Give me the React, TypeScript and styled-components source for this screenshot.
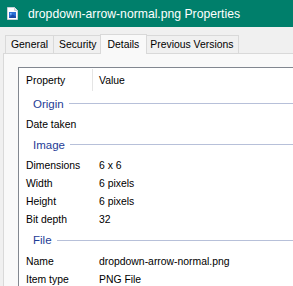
import { FC } from 'react';
import styled, { createGlobalStyle } from 'styled-components';

const Global = createGlobalStyle`
    html, body {
        margin: 0;
        padding: 0;
        background: #f0f0f0;
        overflow: hidden;
    }
    body {
        font-family: 'Liberation Sans', Arial, sans-serif;
        font-size: 10.4px;
        color: #000;
    }
`;

const Window = styled.div`
    width: 293px;
    height: 286px;
    display: flex;
    flex-direction: column;
    background: #f0f0f0;
    overflow: hidden;
`;

const TitleBar = styled.div`
    height: 27px;
    flex: none;
    display: flex;
    align-items: center;
    gap: 10px;
    padding-left: 7px;
    background: #007f6b;
    color: #fff;
    font-size: 12.2px;
    white-space: nowrap;
`;

const TabStrip = styled.div`
    display: flex;
    align-items: flex-end;
    height: 26px;
    padding-left: 5px;
    flex: none;
    position: relative;
    z-index: 1;
`;

const Tab = styled.div<{ $active?: boolean }>`
    height: ${(p) => (p.$active ? '19px' : '17px')};
    padding: 0 ${(p) => (p.$active ? '7px' : '5px')};
    margin-left: ${(p) => (p.$active ? '-3px' : '-1px')};
    margin-right: ${(p) => (p.$active ? '-2px' : '0')};
    margin-bottom: ${(p) => (p.$active ? '-1px' : '0')};
    border: 1px solid #d9d9d9;
    border-bottom: none;
    background: ${(p) => (p.$active ? '#f9f9f9' : '#f0f0f0')};
    display: flex;
    align-items: center;
    white-space: nowrap;
    position: relative;
    z-index: ${(p) => (p.$active ? 1 : 0)};
    &:first-child {
        margin-left: 0;
    }
`;

const Panel = styled.div`
    flex: 1;
    margin-left: 3px;
    border-top: 1px solid #d9d9d9;
    border-left: 1px solid #d9d9d9;
    background: #f9f9f9;
    padding: 13px 0 0 14px;
    display: flex;
`;

const ListView = styled.div`
    flex: 1;
    border-top: 1px solid #828790;
    border-left: 1px solid #828790;
    background: #fff;
    padding-left: 7px;
`;

const Header = styled.div`
    display: flex;
    height: 24px;
    align-items: center;
`;

const HeaderCell = styled.div<{ $w?: number; $pad?: number }>`
    width: ${(p) => (p.$w ? `${p.$w}px` : 'auto')};
    padding-left: ${(p) => p.$pad ?? 0}px;
    height: 100%;
    display: flex;
    align-items: center;
`;

const HeaderDivider = styled.div`
    width: 1px;
    height: 22px;
    background: #e5e5e5;
`;

const Row = styled.div`
    display: flex;
    height: 18.2px;
    align-items: center;
    white-space: nowrap;
`;

const Key = styled.div`
    width: 73px;
    flex: none;
`;

const Group = styled.div`
    display: flex;
    align-items: center;
    height: 23px;
    padding-left: 7px;
    gap: 5px;
    color: #1e3c96;
    font-size: 11.5px;
    &::after {
        content: '';
        flex: 1;
        height: 1px;
        background: #b7c0d9;
    }
`;

const FileIcon: FC = () => (
    <svg width="11" height="13" viewBox="0 0 11 13">
        <path d="M0.5 0.5 H7.5 L10.5 3.5 V12.5 H0.5 Z" fill="#fff" stroke="#c8d0d8" />
        <path d="M7.5 0.5 V3.5 H10.5" fill="#e4e8ee" stroke="#c8d0d8" />
        <rect x="2" y="5" width="7" height="6" fill="#2a6fd6" />
        <path d="M2 11 L5.5 7.5 L9 9.5 V11 Z" fill="#1a4aa8" />
        <circle cx="3.8" cy="6.8" r="0.9" fill="#8fc2ff" />
    </svg>
);

type Item = { k: string; v?: string } | { group: string };

const items: Item[] = [
    { group: 'Origin' },
    { k: 'Date taken' },
    { group: 'Image' },
    { k: 'Dimensions', v: '6 x 6' },
    { k: 'Width', v: '6 pixels' },
    { k: 'Height', v: '6 pixels' },
    { k: 'Bit depth', v: '32' },
    { group: 'File' },
    { k: 'Name', v: 'dropdown-arrow-normal.png' },
    { k: 'Item type', v: 'PNG File' },
];

const App: FC = () => {
    return (
        <Window>
            <Global />
            <TitleBar>
                <FileIcon />
                <span>dropdown-arrow-normal.png Properties</span>
            </TitleBar>
            <TabStrip>
                <Tab>General</Tab>
                <Tab>Security</Tab>
                <Tab $active>Details</Tab>
                <Tab>Previous Versions</Tab>
            </TabStrip>
            <Panel>
                <ListView>
                    <Header>
                        <HeaderCell $w={66}>Property</HeaderCell>
                        <HeaderDivider />
                        <HeaderCell $pad={6}>Value</HeaderCell>
                    </Header>
                    {items.map((item, i) =>
                        'group' in item ? (
                            <Group key={i}>{item.group}</Group>
                        ) : (
                            <Row key={i}>
                                <Key>{item.k}</Key>
                                <span>{item.v}</span>
                            </Row>
                        )
                    )}
                </ListView>
            </Panel>
        </Window>
    );
};

export default App;
